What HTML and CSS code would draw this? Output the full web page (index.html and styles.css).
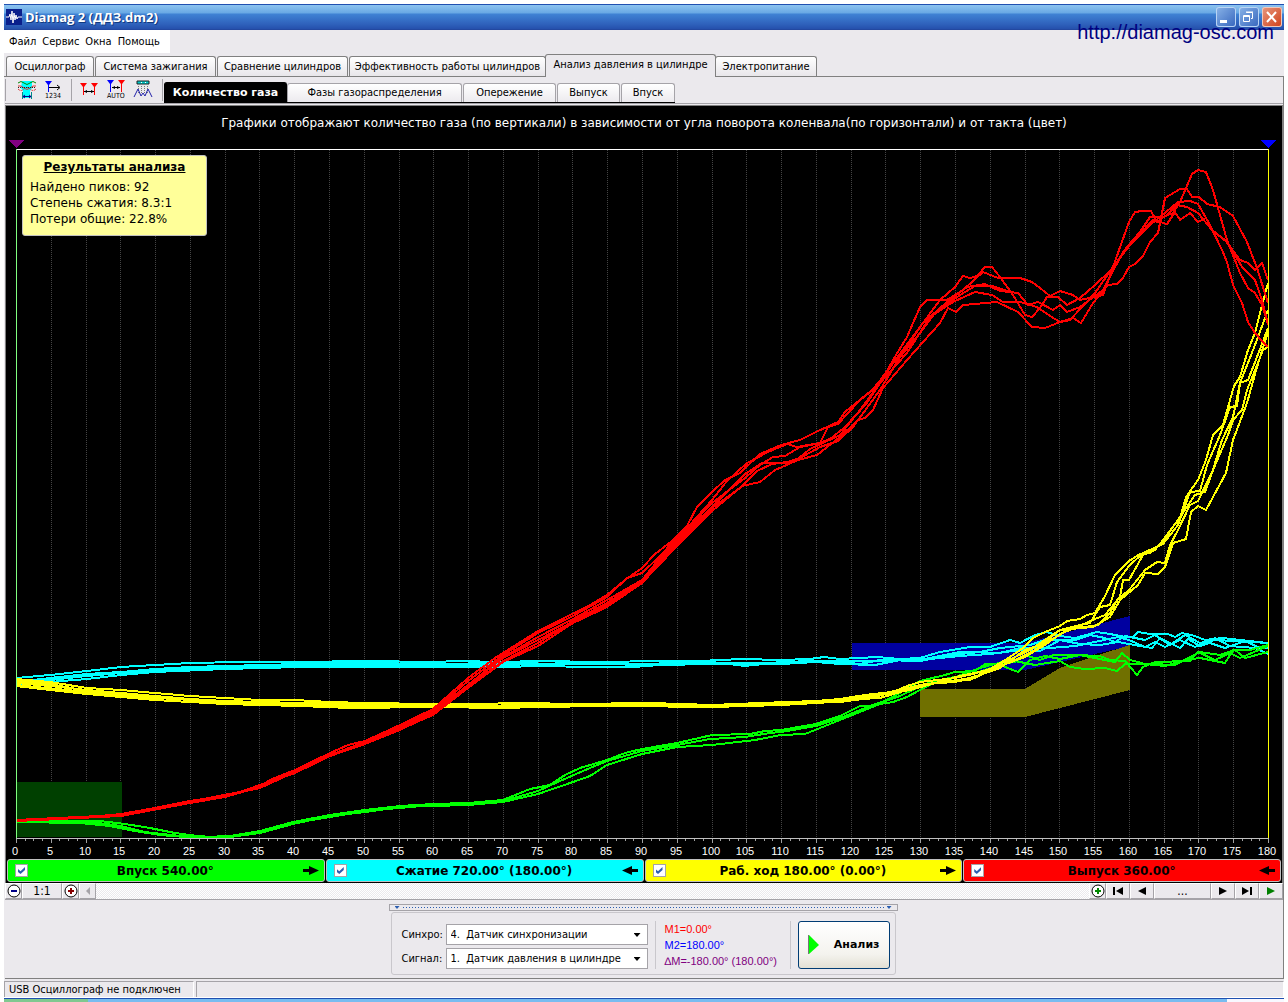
FILE: index.html
```html
<!DOCTYPE html>
<html lang="ru">
<head>
<meta charset="utf-8">
<title>Diamag 2 (ДДЗ.dm2)</title>
<link rel="stylesheet" href="styles.css">
</head>
<body>
<div class="window">
  <header class="titlebar">
    <svg class="app-icon" width="16" height="16" viewBox="0 0 16 16" aria-hidden="true"><rect width="16" height="16" fill="#0a1f8c"/><path d="M0 8H3L4 5L5 11L6 2L7 14L8 4L9 11L10 6L11 10L12 8H16" fill="none" stroke="#fff"/></svg>
    <h1 class="title">Diamag 2 (ДДЗ.dm2)</h1>
    <div class="caption-buttons">
      <button class="cap" aria-label="Свернуть"><svg width="20" height="20" viewBox="0 0 20 20"><path d="M4 14.500H11" stroke="#fff" stroke-width="3"/></svg></button>
      <button class="cap" aria-label="Восстановить"><svg width="20" height="20" viewBox="0 0 20 20" fill="none" stroke="#fff"><path d="M4.500 8.500H10.500V14.500H4.500ZM4 9.500H11M7.500 6V5.500H13.500V11.500H12M7 5H14"/></svg></button>
      <button class="cap cap-close" aria-label="Закрыть"><svg width="20" height="20" viewBox="0 0 20 20"><path d="M5 5L14 15M14 5L5 15" stroke="#fff" stroke-width="2"/></svg></button>
    </div>
    <a class="site" href="http://diamag-osc.com">http://diamag-osc.com</a>
  </header>

  <nav class="menu">
    <button>Файл</button><button>Сервис</button><button>Окна</button><button>Помощь</button>
  </nav>

  <div class="tabs" role="tablist">
    <button class="tab tab-osc" role="tab">Осциллограф</button>
    <button class="tab tab-ignition" role="tab">Система зажигания</button>
    <button class="tab tab-compare" role="tab">Сравнение цилиндров</button>
    <button class="tab tab-efficiency" role="tab">Эффективность работы цилиндров</button>
    <button class="tab tab-active" role="tab" aria-selected="true">Анализ давления в цилиндре</button>
    <button class="tab tab-power" role="tab">Электропитание</button>
  </div>

  <main class="page">
    <div class="toolbar">
      <div class="tools">
        <button class="tool" aria-label="Фазы"><svg width="20" height="20" viewBox="0 0 20 20" fill="none"><path d="M5 1H15V8L13 11V18H6V11L4 8Z" fill="#0ff"/><path d="M1 3Q4 0 7 3Q10 6 13 3Q16 0 19 3" stroke="#080"/><path d="M1 6Q4 5 7 8Q10 11 13 8Q16 5 19 6" stroke="#d33"/><path d="M1 9Q4 12 7 9Q10 6 13 9Q16 12 19 9" stroke="#d33" stroke-dasharray="2 1"/><path d="M1 7.500H19" stroke="#222" stroke-dasharray="1 1"/><path d="M5.500 12V19M14.500 12V19" stroke="#088"/><path d="M6 16.500H14M8 15L6 16.500L8 18M12 15L14 16.500L12 18" stroke="#008"/></svg></button>
        <button class="tool" aria-label="Нумерация"><svg width="20" height="20" viewBox="0 0 20 20"><path d="M1 1H8L5 5V12H4V5Z" fill="#00f"/><path d="M5 7.500H15M13 5L16 7.500L13 10" stroke="#000" fill="none"/><text x="1" y="18" class="tool-text">1234</text></svg></button>
        <span class="divider"></span>
        <button class="tool" aria-label="Маркеры"><svg width="20" height="20" viewBox="0 0 20 20"><path d="M1 3H8L5 7V15H4V7ZM12 3H19L16 7V15H15V7Z" fill="#f00"/><path d="M5 11.500H15" stroke="#000"/><path d="M5 11.500L8 10V13ZM15 11.500L12 10V13Z"/></svg></button>
        <button class="tool" aria-label="Автомаркеры"><svg width="20" height="20" viewBox="0 0 20 20"><path d="M1 0H8L5 4V12H4V4Z" fill="#00f"/><path d="M12 0H19L16 4V12H15V4Z" fill="#f00"/><path d="M6 7.500H14" stroke="#000"/><path d="M6 7.500L9 6V9ZM14 7.500L11 6V9Z"/><text x="1" y="18" class="tool-text">AUTO</text></svg></button>
        <button class="tool" aria-label="Сравнение"><svg width="20" height="20" viewBox="0 0 20 20" fill="none"><path d="M4 1H16V4H4Z" fill="#0cc" stroke="#222"/><path d="M8 2.500H9M12 2.500H13" stroke="#fff"/><path d="M5.500 6V14M8.500 6V14M11.500 6V14M14.500 6V14" stroke="#777" stroke-dasharray="1 1"/><path d="M1 17L5 9L8 16L10 13L12 16L15 9L19 17" stroke="#22a"/></svg></button>
        <span class="divider"></span>
      </div>
      <div class="subtabs" role="tablist">
        <button class="subtab subtab-active" role="tab" aria-selected="true">Количество газа</button>
        <button class="subtab subtab-wide" role="tab">Фазы газораспределения</button>
        <button class="subtab subtab-mid" role="tab">Опережение</button>
        <button class="subtab" role="tab">Выпуск</button>
        <button class="subtab subtab-narrow" role="tab">Впуск</button>
      </div>
    </div>

    <section class="scope">
      <p class="caption">Графики отображают количество газа (по вертикали) в зависимости от угла поворота коленвала(по горизонтали) и от такта (цвет)</p>
      <div class="plot">
        <svg class="chart" viewBox="6 138 1276 720" role="img" aria-label="Количество газа по углу поворота">
          <g id="grid"></g>
          <path class="zone-intake" d="M17 782H122V837H17Z"/>
          <path class="zone-comp" d="M852 643H1025L1130 616V646L1025 670H852Z"/>
          <path class="zone-work" d="M920 689H1025L1060 668L1095 656L1130 645V690L1025 717H920Z"/>
          <g id="traces"></g>
          <path class="frame-top" d="M16 149.500H1269"/>
          <path class="frame-bottom" d="M16 838.500H1269"/>
          <path class="frame-left" d="M16.500 149V838"/>
          <path class="frame-right" d="M1268.500 149V838"/>
          <path fill="#800080" d="M8 140H24L16 148Z"/>
          <path fill="#00f" d="M1260 140H1276L1268 148Z"/>
          <g id="labels"></g>
        </svg>
        <aside class="results">
          <h2>Результаты анализа</h2>
          <p>Найдено пиков: 92</p>
          <p>Степень сжатия: 8.3:1</p>
          <p>Потери общие: 22.8%</p>
        </aside>
      </div>
      <div class="bands">
        <label class="band band-intake"><input type="checkbox" checked><span>Впуск 540.00°</span><svg width="16" height="9" viewBox="0 0 16 9"><path d="M0 3H6V0L16 4.500L6 9V6H0Z"/></svg></label>
        <label class="band band-comp"><input type="checkbox" checked><span>Сжатие 720.00° (180.00°)</span><svg width="16" height="9" viewBox="0 0 16 9"><path d="M16 3H10V0L0 4.500L10 9V6H16Z"/></svg></label>
        <label class="band band-work"><input type="checkbox" checked><span>Раб. ход 180.00° (0.00°)</span><svg width="16" height="9" viewBox="0 0 16 9"><path d="M0 3H6V0L16 4.500L6 9V6H0Z"/></svg></label>
        <label class="band band-exhaust"><input type="checkbox" checked><span>Выпуск 360.00°</span><svg width="16" height="9" viewBox="0 0 16 9"><path d="M16 3H10V0L0 4.500L10 9V6H16Z"/></svg></label>
      </div>
    </section>

    <div class="navigator">
      <button class="nav-btn" aria-label="Уменьшить"><svg width="14" height="14" viewBox="0 0 14 14"><circle cx="7" cy="7" r="6" fill="#fff" stroke="#000"/><path d="M4 7H10" stroke="#008" stroke-width="2"/></svg></button>
      <button class="nav-btn nav-scale">1:1</button>
      <button class="nav-btn" aria-label="Увеличить"><svg width="14" height="14" viewBox="0 0 14 14"><circle cx="7" cy="7" r="6" fill="#fff" stroke="#000"/><path d="M4 7H10M7 4V10" stroke="#800" stroke-width="2"/></svg></button>
      <button class="nav-btn" aria-label="Влево" disabled><svg width="14" height="14" viewBox="0 0 14 14"><path d="M9 3V11L5 7Z" fill="#a5a3a8"/></svg></button>
      <div class="track"></div>
      <button class="nav-btn" aria-label="Добавить"><svg width="14" height="14" viewBox="0 0 14 14"><circle cx="7" cy="7" r="6" fill="#fff" stroke="#000"/><path d="M4 7H10M7 4V10" stroke="#080" stroke-width="2"/></svg></button>
      <button class="nav-btn nav-wide" aria-label="В начало"><svg width="14" height="14" viewBox="0 0 14 14"><path d="M2 3H4V11H2ZM12 3V11L5 7Z"/></svg></button>
      <button class="nav-btn nav-wide" aria-label="Назад"><svg width="14" height="14" viewBox="0 0 14 14"><path d="M11 3V11L3 7Z"/></svg></button>
      <button class="nav-btn nav-more">...</button>
      <button class="nav-btn nav-wide" aria-label="Вперёд"><svg width="14" height="14" viewBox="0 0 14 14"><path d="M3 3V11L11 7Z"/></svg></button>
      <button class="nav-btn nav-wide" aria-label="В конец"><svg width="14" height="14" viewBox="0 0 14 14"><path d="M10 3H12V11H10ZM2 3V11L9 7Z"/></svg></button>
      <button class="nav-btn nav-wide" aria-label="Пуск"><svg width="14" height="14" viewBox="0 0 14 14"><path d="M3 3V11L11 7Z" fill="#008000"/></svg></button>
    </div>

    <section class="dock">
      <div class="splitter"><i></i><b></b><i></i></div>
      <form class="controls">
        <div class="fields">
          <label for="sync">Синхро:</label>
          <div class="combo"><select id="sync"><option>4.&nbsp; Датчик синхронизации</option></select></div>
          <label for="signal">Сигнал:</label>
          <div class="combo"><select id="signal"><option>1.&nbsp; Датчик давления в цилиндре</option></select></div>
        </div>
        <div class="readings">
          <p class="m1">M1=0.00°</p>
          <p class="m2">M2=180.00°</p>
          <p class="dm">∆M=-180.00° (180.00°)</p>
        </div>
        <button class="analyse" type="button"><svg width="11" height="20" viewBox="0 0 11 20"><path d="M1 0L11 10L1 19Z" fill="#0f0"/><path d="M.5 0V19" stroke="#777"/></svg><span>Анализ</span></button>
      </form>
    </section>
  </main>

  <footer class="status">
    <div class="cell cell-usb">USB Осциллограф не подключен</div>
    <div class="cell cell-rest"></div>
  </footer>
  <div class="taskbar"><span class="start"></span><span class="tasks"></span></div>
</div>
<script src="chart.js"></script>
</body>
</html>
```
FILE: styles.css
```css
* { box-sizing: border-box; }
html, body { margin: 0; background: #fff; }
body {
  font-family: "DejaVu Sans Condensed", "DejaVu Sans", sans-serif;
  font-stretch: condensed;
  font-size: 11px;
  line-height: 16px;
  color: #000;
}
button { font: inherit; color: inherit; padding: 0; border: 0; background: none; white-space: nowrap; }
p, h1, h2 { margin: 0; font-weight: normal; }
svg { display: block; flex: none; }

.window { margin: 4px 4px 0; background: #ebe9ed; }

.titlebar {
  position: relative;
  display: flex;
  align-items: center;
  height: 26px;
  padding: 0 2px;
  gap: 3px;
  border-top: 1px solid #2050b0;
  border-bottom: 1px solid #2348a0;
  background: linear-gradient(#8cc4f0 0, #68a8e4 8px, #3f82d4 9px, #2f62bc 19px, #2550ac 24px);
}
.title {
  flex: 1;
  font-family: "Open Sans", sans-serif;
  font-stretch: normal;
  font-size: 13px;
  font-weight: 700;
  color: #fff;
  text-shadow: 1px 1px 0 #123a80;
}
.caption-buttons { display: flex; gap: 3px; }
.cap { width: 20px; height: 20px; border-radius: 3px; box-shadow: inset 0 0 0 1px #b9d4f4; background: linear-gradient(135deg, #8ab4e8, #3565bd); }
.cap-close { box-shadow: inset 0 0 0 1px #f0c8bc; background: linear-gradient(135deg, #e89880, #d04018); }
.site {
  position: absolute;
  right: 10px;
  top: 16px;
  font-family: "Liberation Sans", sans-serif;
  font-size: 20px;
  line-height: 22px;
  color: #000080;
  text-decoration: none;
}

.menu { display: flex; gap: 6px; width: 166px; height: 23px; padding: 0 5px; background: #fff; }

.tabs { display: flex; align-items: flex-end; gap: 1px; height: 24px; padding: 1px 2px 0; border-bottom: 1px solid #808080; }
.tab {
  flex: none;
  height: 20px;
  border: 1px solid #808080;
  border-bottom: 0;
  border-radius: 3px 3px 0 0;
  background: linear-gradient(#fff, #e8e6ea);
}
.tab-osc { width: 88px; }
.tab-ignition { width: 121px; }
.tab-compare { width: 131px; }
.tab-efficiency { width: 197px; }
.tab-power { width: 102px; }
.tab-active { width: 171px; height: 23px; margin: 0 -2px -1px; padding-bottom: 3px; background: #ebe9ed; }

.page { margin-left: 1px; border-right: 1px solid #808080; border-bottom: 1px solid #808080; }
.toolbar { display: flex; height: 27px; border-bottom: 1px solid #a5a3a8; }
.tools { display: flex; align-items: center; gap: 7px; width: 159px; padding: 0 0 0 11px; border-left: 1px solid #a5a3a8; margin: 2px 0; }
.tool { width: 20px; height: 20px; }
.tool-text { font: 7px "DejaVu Sans Condensed", sans-serif; }
.divider { width: 1px; height: 22px; background: #a5a3a8; }
.tools .divider:last-child { margin-left: 2px; }
.subtabs { display: flex; align-items: flex-end; gap: 1px; margin-top: 5px; border-bottom: 1px solid #000; }
.subtab {
  width: 63px;
  height: 19px;
  border: 1px solid #a5a3a8;
  border-bottom: 0;
  border-radius: 3px 3px 0 0;
  background: linear-gradient(#fff, #eceaee);
}
.subtab-active { width: 123px; height: 20px; margin-right: -1px; border-color: #000; background: #000; color: #fff; font-weight: 700; font-family: "DejaVu Sans", sans-serif; font-stretch: normal; }
.subtab-wide { width: 175px; }
.subtab-mid { width: 93px; }
.subtab-narrow { width: 54px; }

.scope { margin-top: 1px; border: 1px solid #808080; border-width: 1px 1px 0; background: #000; font-family: "DejaVu Sans", sans-serif; font-stretch: normal; }
.caption { height: 32px; line-height: 34px; font-size: 12px; color: #fff; text-align: center; white-space: nowrap; }
.plot { position: relative; }
.chart { width: 100%; height: auto; }
.chart #grid, .chart #traces, .chart path { shape-rendering: crispEdges; }
.grid-line { stroke: #444; stroke-dasharray: 1 1; }
.tick { stroke: #a0a0a0; }
.axis-label { font: 11px "Liberation Sans", sans-serif; fill: #fff; text-anchor: middle; }
.zone-intake { fill: #004000; }
.zone-comp { fill: #0000a0; }
.zone-work { fill: #707000; }
.frame-top { stroke: #fff; }
.frame-bottom { stroke: #c0c0c0; }
.frame-left { stroke: #80ff80; }
.frame-right { stroke: #ff0; }
.trace { fill: none; stroke-width: 2; stroke-linejoin: round; }
.red { stroke: #f00; }
.lime { stroke: #0f0; }
.cyan { stroke: #0ff; }
.yellow { stroke: #ff0; }

.results {
  position: absolute;
  left: 16px;
  top: 17px;
  width: 185px;
  height: 81px;
  padding: 3px 7px;
  border: 1px solid #c0c0c0;
  border-radius: 3px;
  background: #ffff99;
  font-size: 12px;
  white-space: nowrap;
}
.results h2 { margin-bottom: 4px; font-size: 12px; font-weight: 700; text-align: center; text-decoration: underline; }

.bands { display: grid; grid-template-columns: repeat(4, 1fr); gap: 1px; padding: 1px; }
.band {
  display: flex;
  align-items: center;
  height: 23px;
  padding: 0 5px 0 7px;
  border: 1px solid #c0c0c0;
  border-radius: 3px;
  font-size: 12px;
  font-weight: 700;
}
.band span { flex: 1; text-align: center; }
.band input {
  appearance: none;
  width: 13px;
  height: 13px;
  margin: 0;
  border: 1px solid #a5a3a8;
  background: #fff;
}
.band input:checked::before {
  content: "";
  display: block;
  width: 7px;
  height: 7px;
  margin: 2px;
  background: #2a5db0;
  clip-path: polygon(0 28%, 36% 60%, 100% 0, 100% 42%, 36% 100%, 0 70%);
}
.band-intake { background: #0f0; }
.band-comp { background: #0ff; }
.band-work { background: #ff0; }
.band-exhaust { background: #f00; }

.navigator { display: flex; height: 17px; border-bottom: 1px solid #a5a3a8; }
.nav-btn {
  display: flex;
  align-items: center;
  justify-content: center;
  width: 17px;
  border: 1px solid #a5a3a8;
  border-top-color: #fff;
  border-left-color: #fff;
}
.nav-scale { width: 40px; font-size: 12px; font-family: "DejaVu Sans", sans-serif; }
.nav-wide { width: 24px; }
.nav-more { width: 57px; font-size: 12px; }
.track { flex: 1; background: repeating-conic-gradient(#fff 0 25%, #ebe9ed 0 50%) 0 0 / 2px 2px; }

.dock { display: flex; flex-direction: column; align-items: center; padding: 4px 2px 3px 0; }
.splitter { display: flex; align-items: center; gap: 3px; width: 509px; height: 7px; padding: 0 5px; border: 1px solid #a5a3a8; }
.splitter i { width: 5px; height: 3px; background: #2a5db0; clip-path: polygon(0 0, 100% 0, 50% 100%); }
.splitter b { flex: 1; height: 1px; background: repeating-linear-gradient(90deg, #2a5db0 0 1px, transparent 1px 3px); }
.controls { display: flex; align-items: center; width: 505px; height: 63px; margin-top: 1px; padding: 3px 5px 0 10px; border: 1px solid #c9c7cc; border-radius: 3px; }
.fields { display: grid; grid-template-columns: 44px 202px; gap: 3px 0; align-items: center; padding-top: 3px; }
.combo { position: relative; }
.combo select {
  appearance: none;
  display: block;
  width: 100%;
  height: 21px;
  padding: 0 4px;
  border: 1px solid #a5a3a8;
  border-radius: 0;
  background: #fff;
  color: #000;
  font: inherit;
}
.combo::after {
  content: "";
  position: absolute;
  right: 7px;
  top: 9px;
  width: 7px;
  height: 4px;
  background: #000;
  clip-path: polygon(0 0, 100% 0, 50% 100%);
  pointer-events: none;
}
.readings { width: 137px; margin: 0 7px; padding-left: 9px; border: 1px solid #c9c7cc; border-width: 0 1px; font-family: "Liberation Sans", sans-serif; white-space: nowrap; }
.m1 { color: #f00; }
.m2 { color: #00f; }
.dm { color: #800080; }
.analyse {
  display: flex;
  align-items: center;
  gap: 15px;
  flex: 1;
  height: 48px;
  padding: 0 9px;
  border: 1px solid #003c74;
  border-radius: 3px;
  background: linear-gradient(#fff, #f4f3ee 70%, #e2e0d4);
  font-family: "DejaVu Sans", sans-serif;
  font-stretch: normal;
  font-weight: 700;
}

.status { display: flex; gap: 2px; height: 19px; padding-top: 2px; border-bottom: 1px solid #fff; }
.cell { border: 1px solid #a5a3a8; border-right-color: #fff; border-bottom: 0; }
.cell-usb { width: 190px; padding-left: 4px; line-height: 15px; white-space: nowrap; }
.cell-rest { flex: 1; }
.taskbar { display: flex; height: 4px; border-top: 1px solid #2050b0; background: #f8f8ff; }
.start { width: 84px; background: #80c890; }
.tasks { width: 89%; background: #78bcf0; }
```
FILE: chart.js
```js
// Plot geometry: 0..180 degrees of crank angle across the frame.
const LEFT = 16, RIGHT = 1268, TOP = 150, BOTTOM = 838, MAX = 180;
const NS = 'http://www.w3.org/2000/svg';
const xAt = deg => Math.round(LEFT + (RIGHT - LEFT) * deg / MAX);

function add(parent, tag, attrs, text) {
  const el = document.createElementNS(NS, tag);
  for (const key in attrs) el.setAttribute(key, attrs[key]);
  if (text !== undefined) el.textContent = text;
  document.getElementById(parent).appendChild(el);
}

for (let deg = 0; deg <= MAX; deg += 5) {
  const x = xAt(deg) + 0.5;
  if (deg > 0 && deg < MAX) add('grid', 'path', { class: 'grid-line', d: `M${x} ${TOP}V${BOTTOM}` });
  add('labels', 'text', { class: 'axis-label', x: xAt(deg) - 1, y: 855 }, deg);
}
for (let deg = 0; deg <= MAX; deg += 1.25) {
  add('grid', 'path', { class: 'tick', d: `M${xAt(deg) + 0.5} 839v${deg % 5 ? 2 : 4}` });
}

const traces = {
  cyan: [
    '16,678 50,675 87,671 121,667 155,665 190,663 240,662 300,662 365,661 433,662 460,661 500,662 540,661 600,662 660,661 700,661 742,659 781,660 810,659 824,657 840,659 877,657 900,659 920,658 940,652 970,647 990,647 1010,640 1020,643 1035,635 1047,632 1060,636 1075,638 1097,632 1110,634 1125,637 1133,637 1138,632 1150,634 1168,634 1175,637 1182,633 1195,636 1205,640 1222,638 1240,640 1268,643',
    '16,682 50,678 87,674 121,672 155,669 190,667 225,666 300,664 365,663 433,664 503,663 572,664 642,664 712,662 745,666 781,662 816,661 840,662 860,664 880,660 920,661 950,655 980,652 1000,648 1030,645 1045,640 1075,640 1090,635 1105,638 1115,642 1125,636 1145,640 1155,635 1170,645 1185,635 1200,643 1215,640 1235,641 1268,643',
    '16,686 50,682 87,679 121,675 155,672 225,669 300,667 365,667 433,667 503,667 540,666 590,667 634,667 660,665 712,664 781,664 816,662 840,664 875,665 900,660 920,660 960,652 1000,653 1020,648 1050,648 1075,646 1090,643 1118,637 1129,640 1145,647 1155,642 1165,647 1180,640 1195,647 1215,638 1230,646 1255,648 1268,654',
    '16,684 50,680 87,676 121,673 155,670 225,668 300,665 365,665 433,665 503,665 572,663 642,665 712,663 781,663 840,661 875,661 920,660 960,656 990,654 1020,650 1040,651 1060,640 1080,644 1100,645 1118,642 1140,646 1152,648 1160,638 1180,648 1188,639 1200,646 1210,643 1225,648 1245,641 1260,648 1268,648'
  ],
  lime: [
    '16,821 90,821 100,821 125,824 150,828 175,833 205,837 230,836 260,831 293,822 330,815 365,810 400,806 433,804 468,803 503,800 530,789 550,785 565,775 580,768 607,760 625,753 642,749 677,743 712,735 750,734 765,731 781,730 816,724 840,716 860,706 875,706 890,698 905,690 920,681 945,675 955,672 975,671 985,664 1000,664 1015,662 1025,655 1040,660 1053,655 1075,655 1100,656 1110,660 1125,661 1137,675 1143,667 1155,662 1190,661 1198,652 1215,660 1230,653 1240,658 1268,646',
    '16,822 80,823 110,826 135,831 160,835 185,837 230,837 260,833 293,824 330,816 365,812 400,807 433,806 468,805 503,802 538,794 573,782 590,776 607,765 642,754 677,747 712,745 755,740 781,735 805,734 820,728 840,720 860,712 880,704 893,702 907,697 920,690 940,680 975,673 1000,665 1018,672 1030,660 1045,656 1060,659 1080,655 1115,662 1122,653 1130,660 1145,664 1165,666 1185,660 1200,658 1225,663 1233,650 1250,650 1268,645',
    '16,822 90,822 121,826 145,832 180,836 230,837 260,832 293,823 330,817 365,811 433,805 503,801 538,791 560,781 590,768 607,761 642,751 677,745 710,739 745,737 770,733 781,732 816,726 840,718 870,706 900,696 925,684 950,679 980,668 1010,660 1035,665 1060,661 1070,667 1085,669 1105,668 1117,671 1125,664 1150,664 1175,665 1200,652 1220,655 1235,650 1245,658 1268,652'
  ],
  yellow: [
    '16,679 50,682 87,688 121,690 155,693 190,696 225,698 260,700 295,700 330,702 365,703 433,704 468,704 528,703 572,704 650,703 712,705 760,703 816,701 840,699 852,697 873,694 893,692 907,686 920,682 955,678 973,674 990,669 1007,659 1023,648 1033,638 1045,632 1060,626 1067,621 1080,619 1087,615 1095,613 1105,596 1115,575 1129,561 1140,554 1150,553 1163,542 1172,528 1180,518 1186,497 1198,480 1206,460 1213,435 1223,425 1234,386 1240,377 1248,350 1255,333 1262,305 1268,283',
    '16,683 50,686 87,690 121,693 155,696 190,699 225,701 260,702 300,703 350,704 433,705 503,706 572,705 642,704 712,706 781,704 816,702 840,702 870,698 920,685 950,681 973,678 1000,664 1030,650 1045,640 1060,630 1080,625 1090,623 1100,607 1110,605 1117,582 1129,566 1143,553 1163,544 1178,525 1190,492 1200,491 1207,465 1220,435 1230,407 1237,406 1240,383 1255,345 1268,310',
    '16,686 50,690 87,694 121,697 155,700 190,702 225,704 260,705 300,706 350,708 433,707 503,708 572,706 642,705 677,707 712,707 781,705 816,703 840,700 880,698 907,690 940,682 970,680 1000,666 1025,657 1045,645 1060,634 1080,626 1095,619 1105,615 1120,597 1123,580 1129,580 1143,555 1155,550 1163,540 1178,520 1195,495 1205,492 1213,470 1222,440 1233,417 1240,383 1248,380 1257,357 1268,328',
    '16,681 50,684 87,691 121,695 190,700 260,704 350,706 433,706 572,705 712,705 781,703 840,701 870,696 900,690 925,684 955,682 980,675 1000,668 1025,650 1045,643 1060,635 1067,629 1085,627 1098,625 1110,613 1117,600 1129,590 1145,570 1157,562 1165,563 1170,545 1178,530 1190,505 1198,501 1213,470 1228,435 1233,420 1242,410 1247,390 1257,365 1263,350 1268,347',
    '16,685 87,692 155,698 260,703 350,705 433,707 712,706 840,702 910,690 960,676 990,670 1015,660 1035,650 1060,630 1093,627 1110,617 1120,600 1138,585 1145,573 1158,574 1165,567 1173,543 1186,539 1191,512 1198,506 1206,510 1226,473 1233,440 1247,403 1257,367 1268,332'
  ],
  red: [
    '16,820 60,818 100,816 121,814 155,808 190,801 225,796 260,786 272,779 295,770 330,753 348,745 365,741 400,725 433,709 468,678 495,658 538,631 568,616 590,605 607,595 625,580 642,568 655,554 672,541 687,526 697,507 712,492 725,480 740,473 760,454 781,445 800,440 816,432 838,422 845,412 872,390 885,375 893,360 907,337 920,307 927,300 947,300 963,290 983,272 998,278 1020,278 1032,282 1040,288 1050,296 1060,291 1073,295 1080,300 1103,295 1113,267 1129,222 1135,212 1142,211 1151,211 1157,222 1168,214 1177,205 1187,207 1198,213 1212,230 1225,240 1240,260 1248,263 1255,270 1262,263 1268,280',
    '16,821 60,819 121,815 190,802 260,788 295,772 330,755 365,743 400,727 433,711 468,681 503,655 538,633 573,616 607,597 627,578 642,573 660,556 672,543 688,527 712,500 727,481 747,463 768,452 787,444 797,447 820,443 828,427 838,424 860,400 873,390 893,363 907,347 920,327 940,300 955,287 963,276 970,278 977,276 985,267 992,267 1000,277 1013,295 1025,315 1032,317 1040,308 1047,297 1058,297 1067,305 1080,298 1095,285 1113,268 1127,247 1140,232 1150,217 1163,217 1173,213 1180,202 1192,174 1198,170 1206,172 1213,190 1220,215 1227,240 1240,273 1248,288 1255,293 1262,305 1268,323',
    '16,820 121,815 155,809 225,797 260,787 295,770 330,755 365,743 400,728 433,712 468,685 500,659 538,637 573,619 607,600 642,580 660,558 712,503 745,478 760,465 773,457 785,456 800,447 816,444 830,439 845,427 867,403 893,363 923,323 947,302 967,287 985,284 1000,291 1018,293 1028,305 1038,302 1053,310 1060,305 1067,312 1080,307 1103,290 1123,252 1137,237 1153,220 1167,224 1175,212 1180,220 1190,213 1198,222 1206,218 1212,230 1228,243 1242,267 1255,280 1262,300 1268,325',
    '16,821 121,816 190,803 225,797 295,773 330,756 365,744 400,730 433,714 468,687 503,661 538,643 573,621 607,603 642,580 677,545 712,508 740,488 757,471 772,464 795,461 810,449 840,435 860,410 880,383 907,353 930,317 953,302 975,292 992,295 1003,302 1020,302 1037,307 1050,316 1060,322 1070,320 1095,293 1113,267 1130,245 1150,225 1160,217 1178,202 1190,201 1198,204 1210,225 1222,250 1227,262 1233,285 1242,303 1248,322 1255,333 1262,341 1268,347',
    '16,821 121,815 260,788 330,755 400,729 433,715 468,688 503,662 538,646 573,623 607,607 642,583 677,546 712,511 742,486 760,482 775,470 798,460 817,455 840,437 858,420 865,418 873,410 883,388 907,360 940,323 948,308 956,312 963,305 997,302 1018,312 1032,327 1045,328 1060,322 1073,318 1081,323 1093,303 1108,285 1117,284 1123,278 1129,267 1135,264 1143,256 1150,242 1158,233 1165,198 1180,189 1187,189 1192,197 1199,197 1207,204 1220,207 1233,216 1247,242 1257,268 1268,303',
    '433,712 503,658 538,640 573,622 607,605 642,581 677,542 712,507 745,474 762,463 785,463 800,458 820,447 838,441 853,427 880,390 900,357 920,333 935,313 960,295 975,286 992,286 1010,292'
  ]
};

for (const name of ['cyan', 'lime', 'yellow', 'red']) {
  for (const points of traces[name]) add('traces', 'polyline', { class: `trace ${name}`, points });
}
```
